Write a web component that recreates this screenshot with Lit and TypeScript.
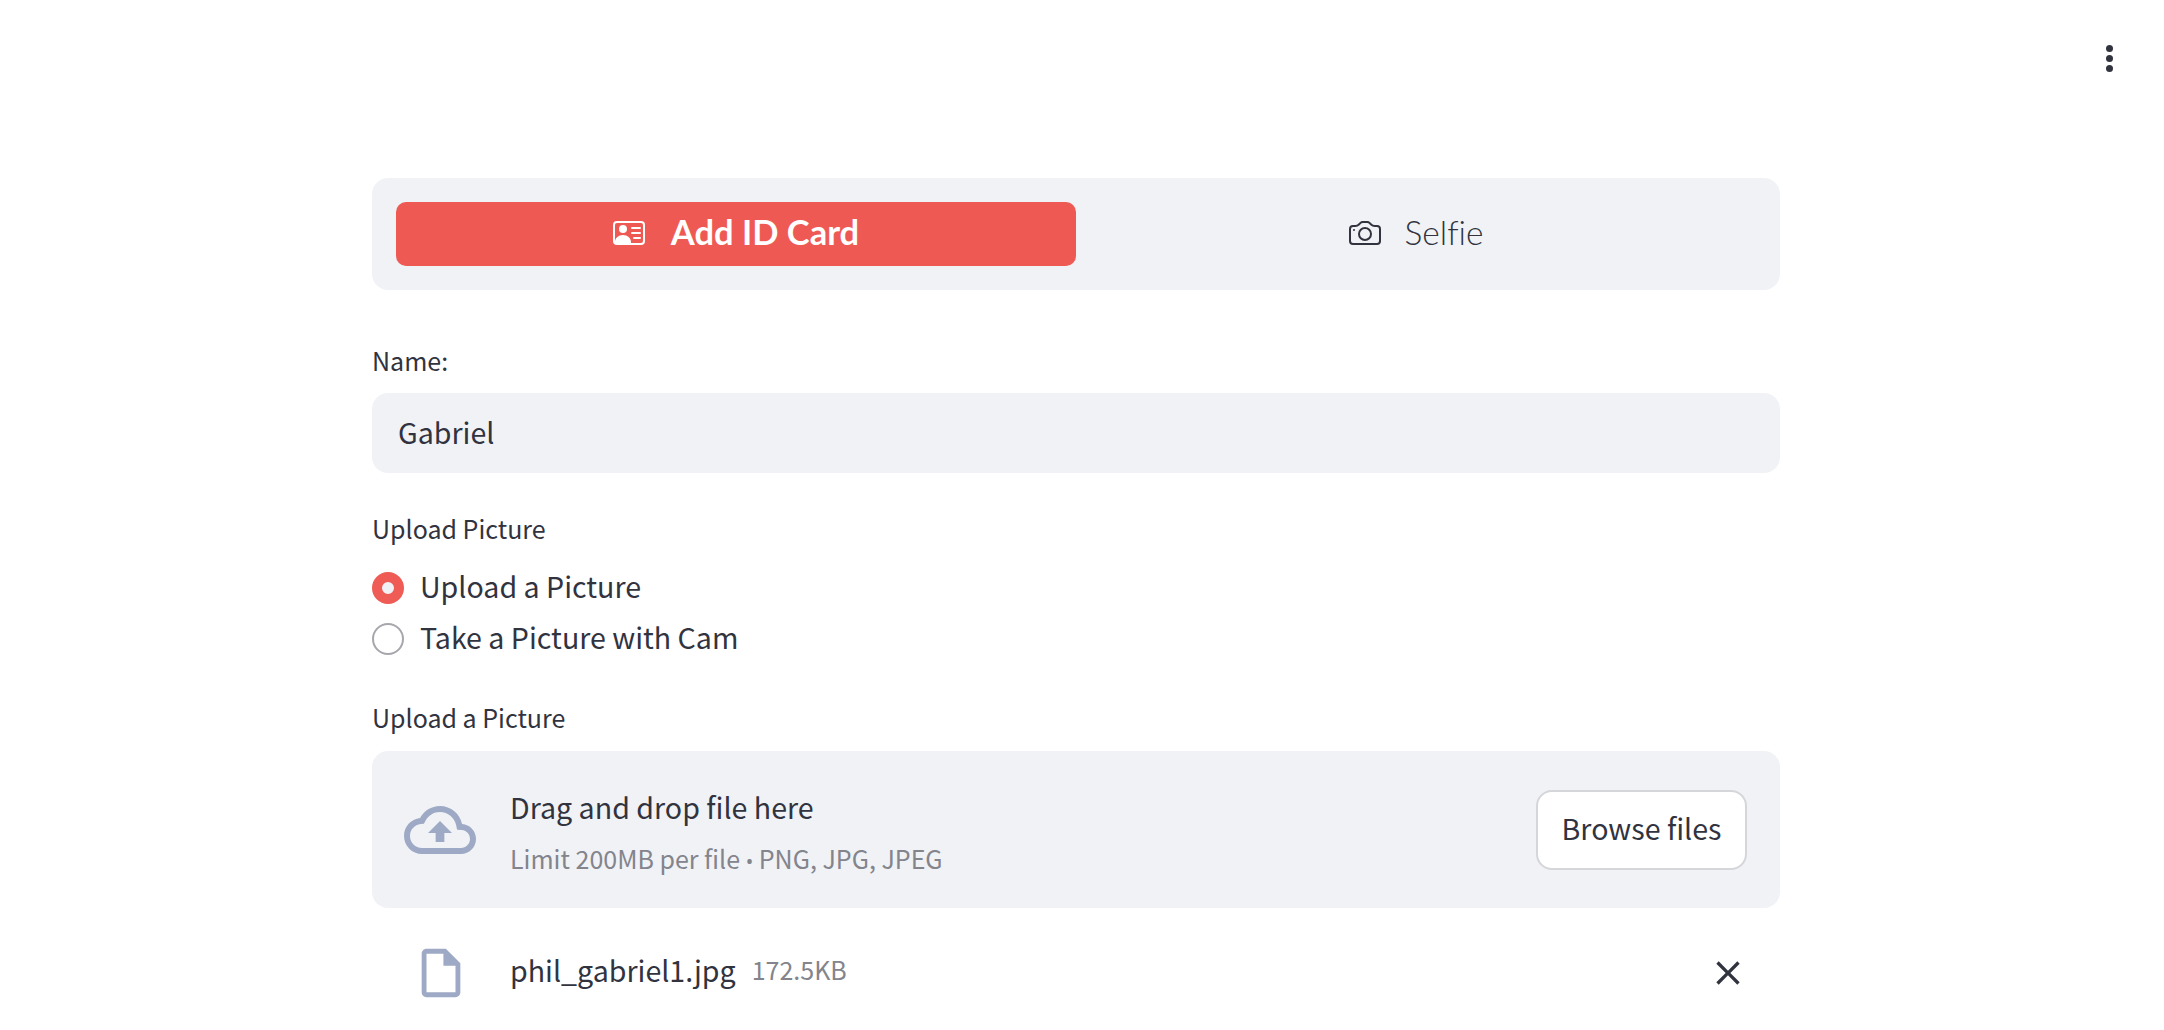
import { LitElement, css, html } from 'lit';
import { customElement, property } from 'lit/decorators.js';

interface NavItem {
  label: string;
  icon: 'vcard' | 'camera';
}

const NAV_ITEMS: NavItem[] = [
  { label: 'Add ID Card', icon: 'vcard' },
  { label: 'Selfie', icon: 'camera' },
];

const RADIO_OPTIONS = ['Upload a Picture', 'Take a Picture with Cam'];

const vcardIcon = html`<svg viewBox="0 0 16 16" fill="currentColor">
  <path d="M5 8a2 2 0 1 0 0-4 2 2 0 0 0 0 4Zm4-2.5a.5.5 0 0 1 .5-.5h4a.5.5 0 0 1 0 1h-4a.5.5 0 0 1-.5-.5ZM9 8a.5.5 0 0 1 .5-.5h4a.5.5 0 0 1 0 1h-4A.5.5 0 0 1 9 8Zm1 2.5a.5.5 0 0 1 .5-.5h3a.5.5 0 0 1 0 1h-3a.5.5 0 0 1-.5-.5Z" />
  <path d="M2 2a2 2 0 0 0-2 2v8a2 2 0 0 0 2 2h12a2 2 0 0 0 2-2V4a2 2 0 0 0-2-2H2ZM1 4a1 1 0 0 1 1-1h12a1 1 0 0 1 1 1v8a1 1 0 0 1-1 1H8.96c.026-.163.04-.33.04-.5C9 10.567 7.21 9 5 9c-2.21 0-4 1.567-4 3.5 0 .17.014.337.04.5H2a1 1 0 0 1-1-1V4Z" />
</svg>`;

const cameraIcon = html`<svg viewBox="0 0 16 16" fill="currentColor">
  <path d="M15 12a1 1 0 0 1-1 1H2a1 1 0 0 1-1-1V6a1 1 0 0 1 1-1h1.172a3 3 0 0 0 2.12-.879l.83-.828A1 1 0 0 1 6.827 3h2.344a1 1 0 0 1 .707.293l.828.828A3 3 0 0 0 12.828 5H14a1 1 0 0 1 1 1v6zM2 4a2 2 0 0 0-2 2v6a2 2 0 0 0 2 2h12a2 2 0 0 0 2-2V6a2 2 0 0 0-2-2h-1.172a2 2 0 0 1-1.414-.586l-.828-.828A2 2 0 0 0 9.172 2H6.828a2 2 0 0 0-1.414.586l-.828.828A2 2 0 0 1 3.172 4H2z" />
  <path d="M8 11a2.5 2.5 0 1 1 0-5 2.5 2.5 0 0 1 0 5zm0 1a3.5 3.5 0 1 0 0-7 3.5 3.5 0 0 0 0 7zM3 6.5a.5.5 0 1 1-1 0 .5.5 0 0 1 1 0z" />
</svg>`;

@customElement('nav-pills')
export class NavPills extends LitElement {
  @property({ type: Number }) selected = 0;

  static override styles = css`
    :host {
      display: block;
    }

    .bar {
      display: flex;
      height: 112px;
      box-sizing: border-box;
      padding: 24px;
      background: #f0f2f6;
      border-radius: 16px;
    }

    .pill {
      flex: 1;
      display: flex;
      align-items: center;
      justify-content: center;
      gap: 24px;
      border-radius: 10px;
      font-family: Lato, sans-serif;
      font-size: 33.5px;
      font-weight: 300;
      font-variant-ligatures: none;
      color: #31333f;
    }

    .pill span {
      padding-bottom: 5px;
    }

    .pill.active {
      gap: 26px;
      background: #ee5a53;
      color: #fff;
      font-size: 34.5px;
      font-weight: 700;
    }

    .pill svg {
      width: 32px;
      height: 32px;
      margin-bottom: 2px;
    }
  `;

  override render() {
    return html`
      <div class="bar">
        ${NAV_ITEMS.map(
          (item, i) => html`
            <div class="pill ${i === this.selected ? 'active' : ''}">
              ${item.icon === 'vcard' ? vcardIcon : cameraIcon}
              <span>${item.label}</span>
            </div>
          `,
        )}
      </div>
    `;
  }
}

@customElement('app-root')
export class AppRoot extends LitElement {
  static override styles = css`
    :host {
      display: block;
      height: 1030px;
      overflow: hidden;
      background: #fff;
      color: #31333f;
      font-family: 'Noto Sans CJK SC', sans-serif;
    }

    .menu {
      position: absolute;
      top: 45px;
      left: 2106px;
      display: flex;
      flex-direction: column;
      gap: 3px;
    }

    .menu span {
      width: 7px;
      height: 7px;
      border-radius: 50%;
      background: #31333f;
    }

    main {
      padding: 178px 384px 0 372px;
    }

    .label {
      font-size: 25px;
      line-height: 36px;
    }

    .name-label {
      margin-top: 52px;
      margin-bottom: 15px;
    }

    .input {
      height: 80px;
      box-sizing: border-box;
      display: flex;
      align-items: center;
      padding: 0 26px 4px;
      background: #f0f2f6;
      border-radius: 16px;
      font-size: 28.6px;
    }

    .radio-label {
      margin-top: 37px;
      margin-bottom: 16px;
    }

    .radio {
      display: flex;
      align-items: center;
      gap: 16px;
      height: 51px;
      font-size: 28.6px;
    }

    .radio span:last-child {
      padding-bottom: 5px;
    }

    .dot {
      width: 32px;
      height: 32px;
      box-sizing: border-box;
      border-radius: 50%;
      border: 2px solid #a6a6ad;
      background: #fff;
    }

    .dot.on {
      border: 10px solid #ef5b55;
      background: #f0f2f6;
    }

    .upload-label {
      margin-top: 35px;
      margin-bottom: 16px;
    }

    .dropzone {
      display: flex;
      align-items: center;
      height: 157px;
      box-sizing: border-box;
      padding: 0 33px 0 32px;
      background: #f0f2f6;
      border-radius: 16px;
    }

    .cloud {
      width: 72px;
      height: 72px;
      margin-right: 34px;
      fill: #9da9c5;
    }

    .hints {
      flex: 1;
      padding-top: 7px;
    }

    .hints .main-hint {
      font-size: 28.6px;
      line-height: 44px;
    }

    .hints .sub-hint {
      margin-top: 9px;
      font-size: 25px;
      line-height: 40px;
      color: #83848c;
    }

    .sub-hint .bullet {
      font-family: 'Noto Sans', sans-serif;
      font-size: 20px;
    }

    .browse {
      width: 211px;
      height: 80px;
      box-sizing: border-box;
      display: flex;
      align-items: center;
      justify-content: center;
      padding-bottom: 5px;
      background: #fff;
      border: 2px solid #d5d6d9;
      border-radius: 16px;
      font-size: 28.6px;
    }

    .file {
      display: flex;
      align-items: center;
      height: 130px;
      padding: 0 32px 0 40px;
    }

    .file-icon {
      width: 58px;
      height: 58px;
      margin-right: 40px;
      fill: #9da9c5;
    }

    .file-name {
      font-size: 28.6px;
      padding-bottom: 8px;
    }

    .file-size {
      flex: 1;
      margin-left: 16px;
      font-size: 25px;
      padding-bottom: 8px;
      color: #83848c;
    }

    .close {
      width: 40px;
      height: 40px;
      fill: #31333f;
    }
  `;

  override render() {
    return html`
      <div class="menu"><span></span><span></span><span></span></div>
      <main>
        <nav-pills></nav-pills>

        <div class="label name-label">Name:</div>
        <div class="input">Gabriel</div>

        <div class="label radio-label">Upload Picture</div>
        ${RADIO_OPTIONS.map(
          (option, i) => html`
            <div class="radio">
              <span class="dot ${i === 0 ? 'on' : ''}"></span>
              <span>${option}</span>
            </div>
          `,
        )}

        <div class="label upload-label">Upload a Picture</div>
        <div class="dropzone">
          <svg class="cloud" viewBox="0 0 24 24">
            <path d="M19.35 10.04C18.67 6.59 15.64 4 12 4 9.11 4 6.6 5.64 5.35 8.04 2.34 8.36 0 10.91 0 14c0 3.31 2.69 6 6 6h13c2.76 0 5-2.24 5-5 0-2.64-2.05-4.78-4.65-4.96zM19 18H6c-2.21 0-4-1.79-4-4 0-2.05 1.53-3.76 3.56-3.97l1.07-.11.5-.95C8.08 7.14 9.94 6 12 6c2.62 0 4.88 1.86 5.39 4.43l.3 1.5 1.53.11c1.56.1 2.78 1.41 2.78 2.96 0 1.65-1.35 3-3 3zM8 13h2.55v3h2.9v-3H16l-4-4z" />
          </svg>
          <div class="hints">
            <div class="main-hint">Drag and drop file here</div>
            <div class="sub-hint">Limit 200MB per file <span class="bullet">•</span> PNG, JPG, JPEG</div>
          </div>
          <div class="browse">Browse files</div>
        </div>

        <div class="file">
          <svg class="file-icon" viewBox="0 0 24 24">
            <path d="M14 2H6c-1.1 0-1.99.9-1.99 2L4 20c0 1.1.89 2 1.99 2H18c1.1 0 2-.9 2-2V8l-6-6zM6 20V4h7v5h5v11H6z" />
          </svg>
          <span class="file-name">phil_gabriel1.jpg</span>
          <span class="file-size">172.5KB</span>
          <svg class="close" viewBox="0 0 24 24">
            <path d="M19 6.41 17.59 5 12 10.59 6.41 5 5 6.41 10.59 12 5 17.59 6.41 19 12 13.41 17.59 19 19 17.59 13.41 12z" />
          </svg>
        </div>
      </main>
    `;
  }
}
